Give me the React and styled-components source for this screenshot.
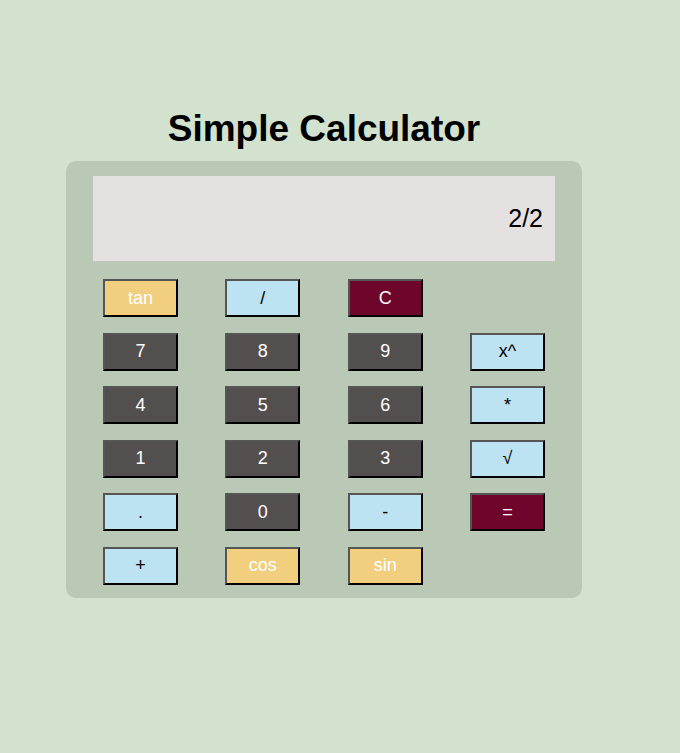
import styled, { createGlobalStyle } from "styled-components";

const GlobalStyle = createGlobalStyle`
  html, body {
    margin: 0;
    padding: 0;
    background: #d2e2cf;
    font-family: "Liberation Sans", Arial, sans-serif;
  }
`;

const keys = [
  { label: "tan", kind: "fn" },
  { label: "/", kind: "op" },
  { label: "C", kind: "danger" },
  { label: "", kind: "empty" },
  { label: "7", kind: "num" },
  { label: "8", kind: "num" },
  { label: "9", kind: "num" },
  { label: "x^", kind: "op" },
  { label: "4", kind: "num" },
  { label: "5", kind: "num" },
  { label: "6", kind: "num" },
  { label: "*", kind: "op" },
  { label: "1", kind: "num" },
  { label: "2", kind: "num" },
  { label: "3", kind: "num" },
  { label: "√", kind: "op" },
  { label: ".", kind: "op" },
  { label: "0", kind: "num" },
  { label: "-", kind: "op" },
  { label: "=", kind: "danger" },
  { label: "+", kind: "op" },
  { label: "cos", kind: "fn" },
  { label: "sin", kind: "fn" },
];

const colors = {
  fn: { bg: "#f1cf7e", fg: "#ffffff" },
  op: { bg: "#bde3f2", fg: "#000000" },
  num: { bg: "#544f4f", fg: "#ffffff" },
  danger: { bg: "#6e062c", fg: "#ffffff" },
};

const App = () => {
  return (
    <>
      <GlobalStyle />
      <Page>
        <Title>Simple Calculator</Title>
        <Calculator>
          <Display>2/2</Display>
          <Keypad>
            {keys.map((k, i) =>
              k.kind === "empty" ? (
                <Spacer key={i} />
              ) : (
                <Key key={i} $kind={k.kind}>
                  {k.label}
                </Key>
              )
            )}
          </Keypad>
        </Calculator>
      </Page>
    </>
  );
};

const Page = styled.div`
  width: 516px;
  margin-left: 66px;
  padding-top: 107px;
  display: flex;
  flex-direction: column;
  align-items: center;
`;

const Title = styled.h1`
  margin: 0 0 10px;
  font-family: "Liberation Sans", Arial, sans-serif;
  font-size: 37px;
  font-weight: 700;
  line-height: 44px;
  color: #000;
`;

const Calculator = styled.div`
  width: 100%;
  box-sizing: border-box;
  background: #bac8b6;
  border-radius: 10px;
  padding: 15px 27px 13px;
`;

const Display = styled.div`
  height: 85px;
  background: #e6e1e1;
  display: flex;
  align-items: center;
  justify-content: flex-end;
  padding-right: 12px;
  font-size: 25px;
  color: #000;
`;

const Keypad = styled.div`
  margin: 18px 10px 0;
  display: grid;
  grid-template-columns: repeat(4, 75px);
  justify-content: space-between;
  grid-auto-rows: 38px;
  row-gap: 15.6px;
`;

const Spacer = styled.div``;

const Key = styled.button`
  box-sizing: border-box;
  width: 75px;
  height: 38px;
  padding: 0;
  border-style: solid;
  border-width: 2px;
  border-color: #555 #000 #000 #555;
  background: ${(p) => colors[p.$kind].bg};
  color: ${(p) => colors[p.$kind].fg};
  font-family: "Liberation Sans", Arial, sans-serif;
  font-size: 18px;
  cursor: pointer;
`;

export default App;
